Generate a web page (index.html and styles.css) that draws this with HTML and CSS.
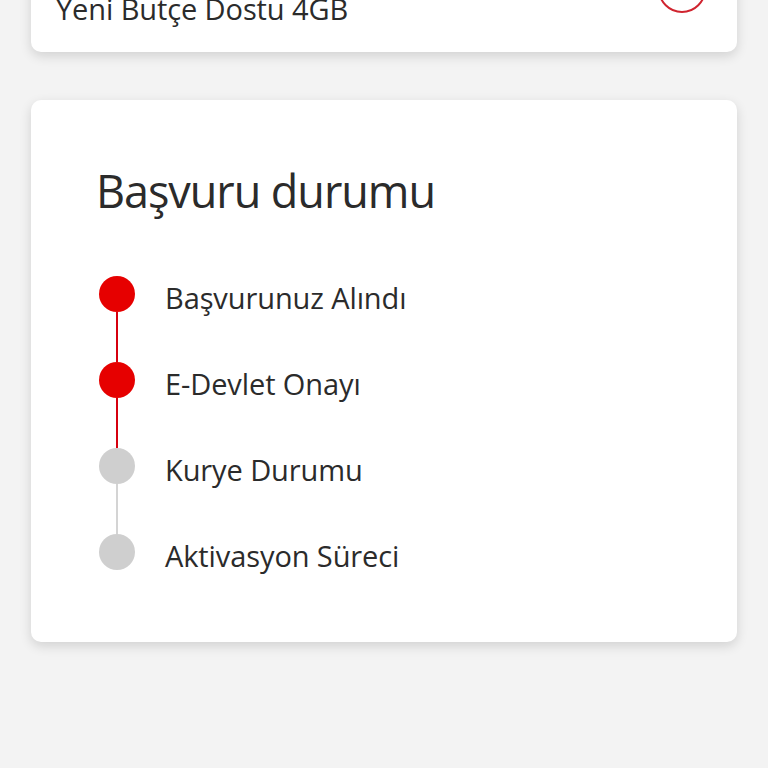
FILE: index.html
```html
<!DOCTYPE html>
<html lang="tr">
<head>
<meta charset="utf-8">
<link rel="stylesheet" href="styles.css">
</head>
<body>
<main class="page">
  <section class="card card-plan">
    <span class="plan-name">Yeni Butçe Dostu 4GB</span>
    <span class="plan-radio"></span>
  </section>
  <section class="card card-status">
    <h1 class="status-title">Başvuru durumu</h1>
    <ol class="timeline">
      <li class="step done line-done">
        <div class="marker"><span class="dot"></span><span class="line"></span></div>
        <span class="label">Başvurunuz Alındı</span>
      </li>
      <li class="step done line-done">
        <div class="marker"><span class="dot"></span><span class="line"></span></div>
        <span class="label">E-Devlet Onayı</span>
      </li>
      <li class="step">
        <div class="marker"><span class="dot"></span><span class="line"></span></div>
        <span class="label">Kurye Durumu</span>
      </li>
      <li class="step last">
        <div class="marker"><span class="dot"></span></div>
        <span class="label">Aktivasyon Süreci</span>
      </li>
    </ol>
  </section>
</main>
</body>
</html>
```
FILE: styles.css
```css
html, body {
  margin: 0;
  padding: 0;
}
body {
  background: #f3f3f3;
  font-family: "Open Sans", "Noto Sans", sans-serif;
  color: #2b2b2b;
  height: 768px;
  overflow: hidden;
}
.page {
  padding: 0 31px;
  display: flex;
  flex-direction: column;
  gap: 48px;
}
.card {
  background: #fff;
  border-radius: 10px;
  box-shadow: 0 4px 12px rgba(0, 0, 0, 0.14);
}
.card-plan {
  height: 100px;
  margin-top: -48px;
  box-sizing: border-box;
  display: flex;
  justify-content: space-between;
  align-items: flex-end;
  padding: 0 31px 26px 25px;
}
.plan-name {
  font-size: 29px;
  line-height: 34px;
  letter-spacing: -0.1px;
}
.plan-radio {
  width: 44px;
  height: 44px;
  border: 2px solid #d0242f;
  border-radius: 50%;
  align-self: flex-start;
  margin-top: 13px;
}
.card-status {
  height: 542px;
  box-sizing: border-box;
  padding: 63px 0 0 65px;
}
.status-title {
  margin: 0 0 57px 0;
  font-size: 45px;
  line-height: 56px;
  font-weight: 500;
  letter-spacing: -1.05px;
  color: #2b2b2b;
}
.timeline {
  list-style: none;
  margin: 0;
  padding: 0 0 0 3px;
}
.step {
  display: grid;
  grid-template-columns: 36px 1fr;
  column-gap: 30px;
  height: 86px;
}
.step.last {
  height: 36px;
}
.marker {
  display: flex;
  flex-direction: column;
  align-items: center;
}
.dot {
  width: 36px;
  height: 36px;
  border-radius: 50%;
  background: #cfcfcf;
  flex: none;
}
.line {
  width: 2px;
  flex: 1;
  background: #d4d4d4;
}
.done .dot {
  background: #e60000;
}
.line-done .line {
  background: #d6000f;
}
.label {
  font-size: 29px;
  line-height: 36px;
  padding-top: 4px;
  letter-spacing: -0.1px;
  color: #2b2b2b;
}
```
